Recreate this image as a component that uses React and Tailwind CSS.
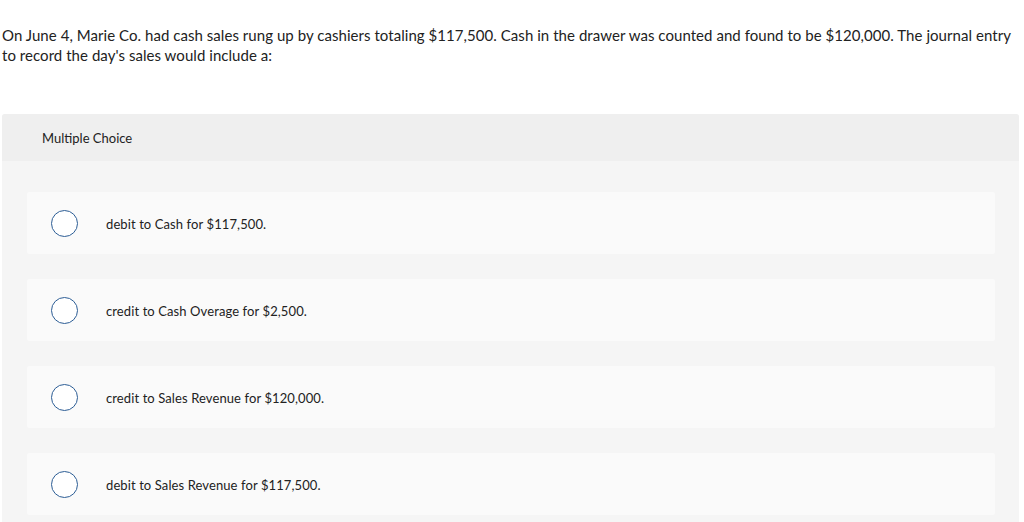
export default function App() {
  const options = [
    "debit to Cash for $117,500.",
    "credit to Cash Overage for $2,500.",
    "credit to Sales Revenue for $120,000.",
    "debit to Sales Revenue for $117,500.",
  ];
  return (
    <div className="w-[1024px] h-[522px] overflow-hidden bg-white text-[#222]" style={{ fontFamily: "Lato, 'Liberation Sans', sans-serif" }}>
      <p className="pt-[25px] pl-[2px] pr-[2px] text-[15px] tracking-[0.05px] leading-[20px]">
        On June 4, Marie Co. had cash sales rung up by cashiers totaling $117,500. Cash in the drawer was counted and found to be $120,000. The journal entry to record the day's sales would include a:
      </p>
      <div className="mt-[49px] ml-[2px] w-[1017px] rounded-t-[3px] bg-[#f5f5f5]">
        <div className="h-[47px] bg-[#efefef] rounded-t-[3px] pl-[40px] pt-[2px] flex items-center text-[13px]">
          Multiple Choice
        </div>
        <div className="pt-[31px] pl-[25px] pr-[24px] flex flex-col gap-[25px] pb-[20px]">
          {options.map((o) => (
            <div key={o} className="h-[62px] rounded-[2px] bg-[#fafafa] flex items-center">
              <div className="ml-[24px] w-[27px] h-[27px] rounded-full border-[1.5px] border-[#2c5d95] bg-white shrink-0" />
              <span className="ml-[28px] pt-[4px] text-[13px] tracking-[0.1px]">{o}</span>
            </div>
          ))}
        </div>
      </div>
    </div>
  );
}
